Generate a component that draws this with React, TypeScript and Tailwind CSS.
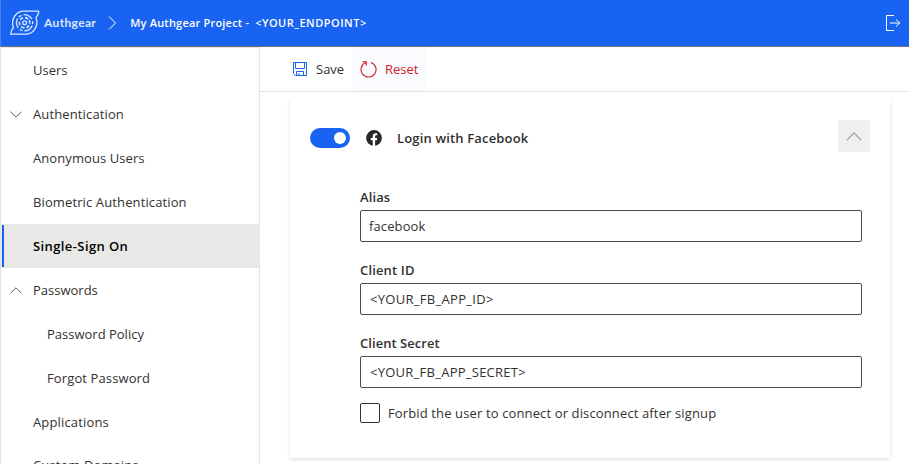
import React from "react";

type NavItem = { label: string; icon?: "up" | "down"; nested?: boolean; selected?: boolean; tracking?: string };

const navItems: NavItem[] = [
  { label: "Users" },
  { label: "Authentication", icon: "down", tracking: "tracking-[0.13px]" },
  { label: "Anonymous Users", tracking: "tracking-[0.08px]" },
  { label: "Biometric Authentication", tracking: "tracking-[0.12px]" },
  { label: "Single-Sign On", selected: true, tracking: "tracking-[0.4px]" },
  { label: "Passwords", icon: "up" },
  { label: "Password Policy", nested: true },
  { label: "Forgot Password", nested: true, tracking: "tracking-[0.12px]" },
  { label: "Applications", tracking: "tracking-[0.15px]" },
  { label: "Custom Domains", tracking: "-mt-[2px] tracking-[0.1px]" },
];

function Chevron({ up, className }: { up?: boolean; className: string }) {
  return (
    <svg viewBox="0 0 12 7" fill="none" stroke="currentColor" className={className}>
      <path d={up ? "M.4 6.4 6 .8l5.6 5.6" : "M.4.6 6 6.2 11.6.6"} />
    </svg>
  );
}

function Logo() {
  return (
    <svg viewBox="0 0 30 26" fill="none" stroke="#dce8ff" strokeWidth="1.3" strokeLinejoin="round" className="h-[26px] w-[30px]">
      <path d="M14 1.1H28.8C28.8 4.5 27.4 6.2 26 7.6C29 16 23.5 24.2 15.5 24.2H.7C.7 21 2 19.2 3.4 17.8C.6 9 6 1.1 14 1.1Z" />
      <circle cx="14.6" cy="12.8" r="8.1" strokeDasharray="10 2 3 2" transform="rotate(20 14.6 12.8)" />
      <circle cx="14.6" cy="12.8" r="5.2" strokeDasharray="3.4 2" strokeWidth="1.6" transform="rotate(-30 14.6 12.8)" />
      <circle cx="14.6" cy="12.8" r="1.9" />
    </svg>
  );
}

function Field({ label, value, inset, labelTracking }: { label: string; value: string; inset: string; labelTracking: string }) {
  return (
    <div className="h-[73px]">
      <div className={`h-[23px] text-[13px] leading-[20px] font-semibold ${labelTracking}`}>{label}</div>
      <div className={`flex h-8 items-center rounded-[2px] border border-[#4b4a49] pt-px text-[13px] ${inset}`}>
        {value}
      </div>
    </div>
  );
}

export default function App() {
  return (
    <div className="flex h-[464px] w-[909px] flex-col overflow-hidden bg-white font-['Open_Sans','Noto_Sans',sans-serif] text-[13px] text-[#323130]">
      <header className="flex h-[47px] shrink-0 items-center border-b border-b-[#6f7275] border-l border-l-[#4b80ec] bg-[#1863f1] pl-[9px] text-white">
        <Logo />
        <span className="ml-[4px] pb-px font-['Lato','Open_Sans',sans-serif] text-[12px] font-bold tracking-[0.35px] text-[#dce8ff]">Authgear</span>
        <svg viewBox="0 0 9 14" fill="none" stroke="white" className="ml-[12px] h-[14px] w-[9px]">
          <path d="m1 .5 6.5 6.5L1 13.5" />
        </svg>
        <span className="ml-[13px] text-[11px] font-semibold tracking-[0.2px]">My Authgear Project -</span>
        <span className="ml-[6px] text-[11px] font-semibold tracking-[0.5px]">&lt;YOUR_ENDPOINT&gt;</span>
        <svg viewBox="0 0 15 16" fill="none" stroke="white" className="mr-2 ml-auto h-4 w-[15px]">
          <path d="M8 .5H.5v15H8M4 8h9.8M10 4.5 13.8 8 10 11.5" />
        </svg>
      </header>
      <div className="flex min-h-0 flex-1">
        <nav className="w-[260px] shrink-0 overflow-hidden border-x border-t border-[#e5e5e5]">
          {navItems.map((item) => (
            <div
              key={item.label}
              className={`flex h-11 items-center ${item.selected ? "bg-[#e9e8e7] font-semibold text-black" : ""}`}
            >
              <span className={`ml-px flex w-[31px] shrink-0 items-center border-l-2 pl-[6px] ${item.selected ? "h-[42px] border-[#1863f1]" : "border-transparent"}`}>
                {item.icon && <Chevron up={item.icon === "up"} className="h-[7px] w-3 text-[#605e5c]" />}
              </span>
              <span className={`pt-[2px] ${item.nested ? "pl-[14px]" : ""} ${item.tracking ?? ""}`}>{item.label}</span>
            </div>
          ))}
        </nav>
        <main className="flex min-w-0 flex-1 flex-col">
          <div className="flex h-[45px] shrink-0 border-b border-[#e1e1e1] pl-[33px]">
            <button className="flex w-[60px] items-center">
              <svg viewBox="0 0 14 14" fill="none" stroke="#1863f1" className="mr-[9px] h-[14px] w-[14px] shrink-0">
                <path d="M.5.5h13v13H2.5l-2-2V.5ZM2.5.5v6h9v-6M3.5 13.5v-4h7v4M6 11v2.5" />
              </svg>
              <span className="pt-[2px]">Save</span>
            </button>
            <button className="flex w-[73px] items-center bg-[#fafbff] pl-[7px] text-[#cf2022]">
              <svg viewBox="0 0 17 17" fill="none" stroke="currentColor" className="mr-2 h-[17px] w-[17px] shrink-0">
                <path d="M11 1.4A7.5 7.5 0 1 1 5.8 1.5M2.3.7h4v4" strokeWidth="1.1" />
              </svg>
              <span className="pt-[2px]">Reset</span>
            </button>
          </div>
          <section className="mt-[7px] ml-[30px] h-[359px] w-[600px] shrink-0 px-5 pt-[21px] shadow-[0_1.6px_3.6px_rgba(0,0,0,0.13),0_0.3px_0.9px_rgba(0,0,0,0.11)]">
            <div className="flex h-9 items-center">
              <div className="flex h-5 w-10 items-center justify-end rounded-full bg-[#1863f1] pr-1">
                <span className="h-3 w-3 rounded-full bg-white" />
              </div>
              <svg viewBox="0 0 16 16" className="ml-4 h-4 w-4">
                <circle cx="8" cy="8" r="7.9" fill="#292827" />
                <path fill="white" d="M6.7 16v-5.8H4.8V8h1.9V6.3c0-2 1.1-3 2.9-3 .8 0 1.7.2 1.7.2v1.8h-1c-.9 0-1.2.6-1.2 1.2V8h2.1l-.3 2.2H9.1V16Z" />
              </svg>
              <h2 className="ml-[15px] pt-[2px] text-[13px] font-semibold tracking-[0.16px]">Login with Facebook</h2>
              <button className="mr-0 mb-1 ml-auto flex h-8 w-8 items-center justify-center rounded-[2px] bg-[#f0efee]">
                <Chevron up className="h-[9px] w-4 text-[#a6a5a4]" />
              </button>
            </div>
            <div className="ml-[50px] w-[502px] pt-[31px]">
              <Field label="Alias" value="facebook" inset="pl-2 tracking-[0.12px]" labelTracking="tracking-[0.1px]" />
              <Field label="Client ID" value="<YOUR_FB_APP_ID>" inset="pl-[9px] tracking-[0.3px]" labelTracking="tracking-[0.15px]" />
              <Field label="Client Secret" value="<YOUR_FB_APP_SECRET>" inset="pl-[9px] tracking-[0.26px]" labelTracking="tracking-[0.05px]" />
              <label className="-mt-[3px] flex h-5 items-center">
                <span className="mr-2 h-5 w-5 rounded-[2px] border border-[#323130]" />
                <span className="pt-[2px] tracking-[0.13px]">Forbid the user to connect or disconnect after signup</span>
              </label>
            </div>
          </section>
        </main>
      </div>
    </div>
  );
}
